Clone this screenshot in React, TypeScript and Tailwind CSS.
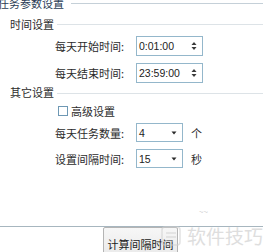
import React from "react";

const Spin = () => (
  <svg width="6" height="10" viewBox="0 0 6 10" className="shrink-0">
    <path d="M3 1 L5.5 4 L0.5 4 Z" fill="#3a3a3a" />
    <path d="M0.5 6 L5.5 6 L3 9 Z" fill="#3a3a3a" />
  </svg>
);

const Caret = () => (
  <svg width="6" height="4" viewBox="0 0 6 4" className="shrink-0">
    <path d="M0.5 0.5 L5.5 0.5 L3 3.5 Z" fill="#2a2a2a" />
  </svg>
);

export default function App() {
  const cjk = "font-['Microsoft_YaHei','Noto_Sans_CJK_SC',sans-serif]";
  const num = "font-['Liberation_Sans','Arial',sans-serif]";
  return (
    <div className={`relative w-[263px] h-[252px] overflow-hidden bg-white text-[11px] text-[#2b2b2b] ${cjk}`}>
      {/* group title */}
      <div className="-mt-[3px] -ml-[2px] h-[12px] flex items-center">
        <span className="leading-[12px] text-[#2a3b55] whitespace-nowrap">任务参数设置</span>
        <div className="ml-[7px] flex-1 h-px bg-[#c5d0d8]" />
      </div>

      {/* 时间设置 */}
      <div className="mt-[9px] pl-[10px] h-[12px] flex items-center">
        <span className="leading-[12px] whitespace-nowrap">时间设置</span>
        <div className="ml-[3px] flex-1 h-px bg-[#dde3e7]" />
      </div>

      <div className="mt-[6px] h-[20px] flex items-center">
        <span className="pl-[55px] w-[136px] leading-[12px] whitespace-nowrap">每天开始时间:</span>
        <div className="w-[67px] h-[20px] border border-[#94b7cb] flex items-center pl-[2px] pr-[5px] justify-between">
          <span className={`${num} text-[10.5px] leading-[12px] text-[#222]`}>0:01:00</span>
          <Spin />
        </div>
      </div>

      <div className="mt-[7px] h-[20px] flex items-center">
        <span className="pl-[55px] w-[136px] leading-[12px] whitespace-nowrap">每天结束时间:</span>
        <div className="w-[67px] h-[20px] border border-[#94b7cb] flex items-center pl-[2px] pr-[5px] justify-between">
          <span className={`${num} text-[10.5px] leading-[12px] text-[#222]`}>23:59:00</span>
          <Spin />
        </div>
      </div>

      {/* 其它设置 */}
      <div className="mt-[3px] pl-[10px] h-[12px] flex items-center">
        <span className="leading-[12px] whitespace-nowrap">其它设置</span>
        <div className="ml-[3px] mt-[3px] flex-1 h-px bg-[#dde3e7]" />
      </div>

      <div className="mt-[7px] h-[12px] flex items-center pl-[58px]">
        <div className="w-[10px] h-[10px] border border-[#6e98b4] bg-white" />
        <span className="ml-[3px] leading-[12px] whitespace-nowrap">高级设置</span>
      </div>

      <div className="mt-[6px] h-[19px] flex items-center">
        <span className="pl-[55px] w-[136px] leading-[12px] whitespace-nowrap">每天任务数量:</span>
        <div className="w-[47px] h-[19px] border border-[#94b7cb] flex items-center pl-[2px] pr-[5px] justify-between">
          <span className={`${num} text-[10.5px] leading-[12px] text-[#222]`}>4</span>
          <Caret />
        </div>
        <span className="ml-[8px] leading-[12px]">个</span>
      </div>

      <div className="mt-[7px] h-[19px] flex items-center">
        <span className="pl-[55px] w-[136px] leading-[12px] whitespace-nowrap">设置间隔时间:</span>
        <div className="w-[47px] h-[19px] border border-[#94b7cb] flex items-center pl-[2px] pr-[5px] justify-between">
          <span className={`${num} text-[10.5px] leading-[12px] text-[#222]`}>15</span>
          <Caret />
        </div>
        <span className="ml-[8px] leading-[12px]">秒</span>
      </div>

      {/* bottom separator */}
      <div className="mt-[58px] h-px bg-[#a7b6bf]" />

      <div className="pl-[103px]">
        <button className="w-[75px] h-[33px] border border-[#b4b4b4] rounded-[2px] bg-gradient-to-b from-[#f7f7f7] to-[#e8e8e8] flex items-center justify-center">
          <span className="leading-[12px] text-[#222] whitespace-nowrap">计算间隔时间</span>
        </button>
      </div>

      {/* watermark overlay */}
      <div className="absolute left-[160px] top-[224px] flex items-center opacity-60 pointer-events-none">
        <svg width="24" height="24" viewBox="0 0 24 24">
          <rect x="2" y="3" width="18" height="18" rx="3" fill="none" stroke="#cfcfcf" strokeWidth="1.5" />
          <path d="M6 9h10M6 13h10M6 17h7" stroke="#cfcfcf" strokeWidth="1.5" />
        </svg>
        <span className="ml-[3px] text-[19px] leading-[22px] text-[#c9c9c9] whitespace-nowrap">软件技巧</span>
      </div>
      <div className="absolute left-[199px] top-[208px] text-[8px] leading-[8px] text-[#d0d0d0] pointer-events-none">~~</div>
    </div>
  );
}
